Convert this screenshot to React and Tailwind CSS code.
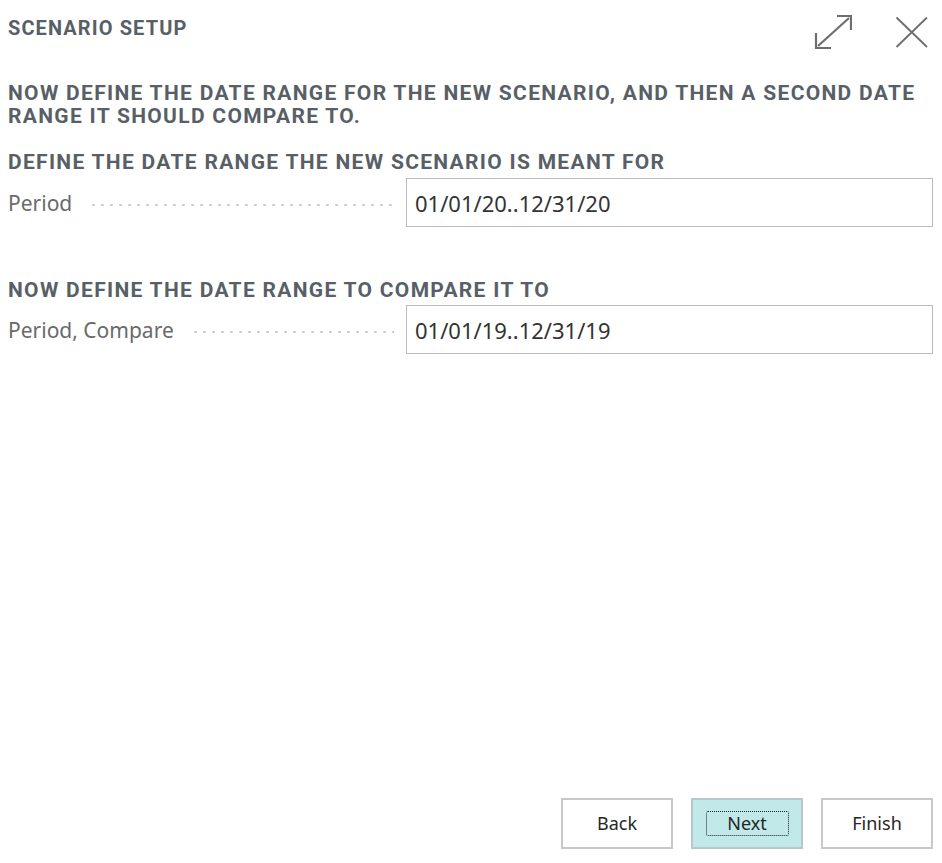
import { useState } from "react";

const din = { fontFamily: "Roboto, 'Liberation Sans', sans-serif" };
const ui = { fontFamily: "'Noto Sans', 'Open Sans', sans-serif" };

function Field({ label, value }) {
  const [v, setV] = useState(value);
  return (
    <div className="flex items-center h-[49px]">
      <div className="w-[398px] flex items-center shrink-0 pr-[12px]">
        <span className="text-[21px] leading-[28px] text-[#6a6a6a] pr-[17px]" style={ui}>{label}</span>
        <span className="flex-1 h-[4px] mt-[4px] bg-[radial-gradient(circle,#c9c9c9_1px,transparent_1.5px)] bg-size-[9px_4px] bg-repeat-x" />
      </div>
      <input
        value={v}
        onChange={(e) => setV(e.target.value)}
        className="h-[49px] w-[527px] border border-[#bcbcbc] px-[8px] text-[22px] text-[#333] outline-none"
        style={ui}
      />
    </div>
  );
}

export default function App() {
  return (
    <div className="w-[942px] h-[863px] bg-white flex flex-col px-2 text-[#585f67]">
      {/* header */}
      <div className="flex items-start justify-between pt-[14px] h-[82px] shrink-0">
        <div className="text-[20px] leading-[24px] font-bold mt-[2px] tracking-[1.1px]" style={din}>SCENARIO SETUP</div>
        <div className="flex items-start gap-[43px] pr-[5px]">
          <svg width="38" height="36" viewBox="0 0 38 36" fill="none" stroke="#6e6e6e" strokeWidth="2.2">
            <path d="M4 32 L35 4" />
            <path d="M23 2 H37 V16" />
            <path d="M2 19 V34 H17" />
          </svg>
          <svg width="34" height="33" viewBox="0 0 34 33" fill="none" stroke="#707070" strokeWidth="1.9" className="mt-[2px]">
            <path d="M1.5 1.5 L32 31 M32 1.5 L1.5 31" />
          </svg>
        </div>
      </div>

      <div className="text-[21px] font-bold leading-[23px] tracking-[1.3px]" style={din}>
        NOW DEFINE THE DATE RANGE FOR THE NEW SCENARIO, AND THEN A SECOND DATE RANGE IT SHOULD COMPARE TO.
      </div>

      <div className="text-[21px] font-bold leading-[23px] tracking-[1.3px] mt-[23px] mb-[4px]" style={din}>
        DEFINE THE DATE RANGE THE NEW SCENARIO IS MEANT FOR
      </div>
      <Field label="Period" value="01/01/20..12/31/20" />

      <div className="text-[21px] font-bold leading-[23px] tracking-[1.3px] mt-[52px] mb-[3px]" style={din}>
        NOW DEFINE THE DATE RANGE TO COMPARE IT TO
      </div>
      <Field label="Period, Compare" value="01/01/19..12/31/19" />

      <div className="flex-1" />

      <div className="flex justify-end gap-[18px] pr-[1px] mb-[14px]" style={ui}>
        <button className="w-[112px] h-[51px] border-2 border-[#c8c8c8] bg-white text-[18px] text-[#262626]">Back</button>
        <button className="w-[112px] h-[51px] border-2 border-[#b5c9ca] bg-[#c1e9ea] text-[18px] text-[#262626] flex items-center justify-center">
          <span className="w-[83px] h-[25px] border border-dotted border-[#222] rounded-[2px] flex items-center justify-center">Next</span>
        </button>
        <button className="w-[112px] h-[51px] border-2 border-[#c8c8c8] bg-white text-[18px] text-[#262626]">Finish</button>
      </div>
    </div>
  );
}
